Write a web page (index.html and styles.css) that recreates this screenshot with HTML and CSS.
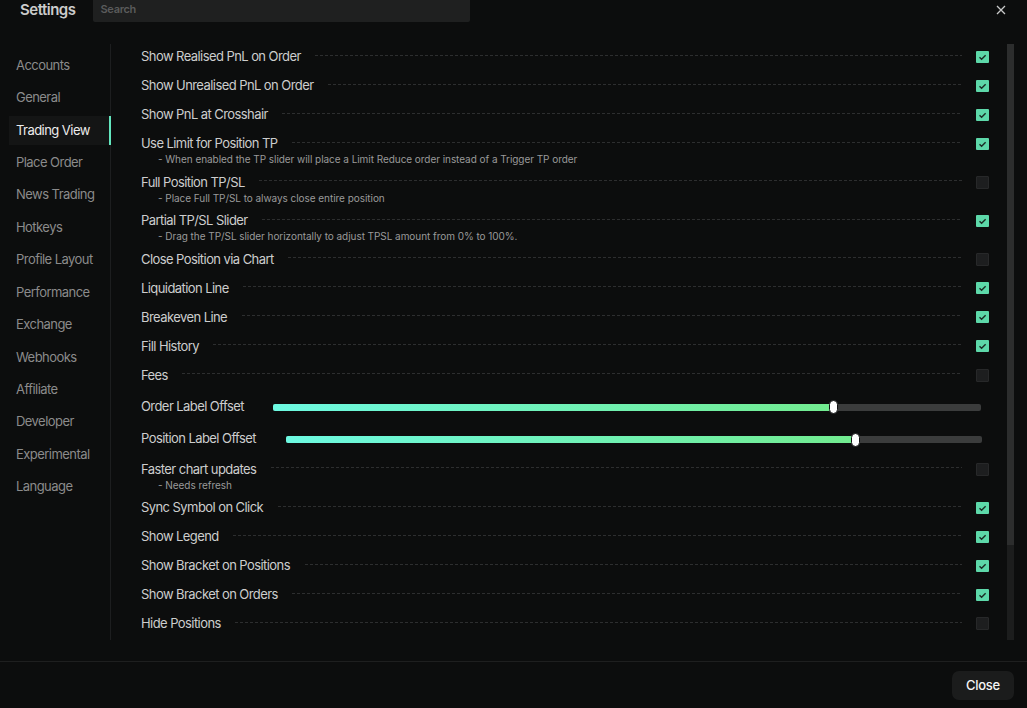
FILE: index.html
```html
<!DOCTYPE html>
<html>
<head>
<meta charset="utf-8">
<link rel="stylesheet" href="styles.css">
</head>
<body>
<div class="dialog">
  <header class="header">
    <div class="title">Settings</div>
    <div class="search">Search</div>
    <div class="spacer"></div>
    <svg class="x-icon" width="10" height="10" viewBox="0 0 10 10"><path d="M1 1L9 9M9 1L1 9" stroke="#c9c9c9" stroke-width="1.3" fill="none"/></svg>
  </header>
  <main class="main">
    <nav class="sidebar">
      <div class="nav-item">Accounts</div>
      <div class="nav-item">General</div>
      <div class="nav-item active">Trading View</div>
      <div class="nav-item">Place Order</div>
      <div class="nav-item">News Trading</div>
      <div class="nav-item">Hotkeys</div>
      <div class="nav-item">Profile Layout</div>
      <div class="nav-item">Performance</div>
      <div class="nav-item">Exchange</div>
      <div class="nav-item">Webhooks</div>
      <div class="nav-item">Affiliate</div>
      <div class="nav-item">Developer</div>
      <div class="nav-item">Experimental</div>
      <div class="nav-item">Language</div>
    </nav>
    <section class="content">
      <div class="row"><div class="line"><span class="label">Show Realised PnL on Order</span><span class="dash"></span><span class="cb on"><svg viewBox="0 0 13 12"><path d="M3.5 6.2L5.6 8.3L9.6 4.2"/></svg></span></div></div>
      <div class="row"><div class="line"><span class="label">Show Unrealised PnL on Order</span><span class="dash"></span><span class="cb on"><svg viewBox="0 0 13 12"><path d="M3.5 6.2L5.6 8.3L9.6 4.2"/></svg></span></div></div>
      <div class="row"><div class="line"><span class="label">Show PnL at Crosshair</span><span class="dash"></span><span class="cb on"><svg viewBox="0 0 13 12"><path d="M3.5 6.2L5.6 8.3L9.6 4.2"/></svg></span></div></div>
      <div class="row has-desc"><div class="line"><span class="label">Use Limit for Position TP</span><span class="dash"></span><span class="cb on"><svg viewBox="0 0 13 12"><path d="M3.5 6.2L5.6 8.3L9.6 4.2"/></svg></span></div><div class="desc">- When enabled the TP slider will place a Limit Reduce order instead of a Trigger TP order</div></div>
      <div class="row has-desc"><div class="line"><span class="label">Full Position TP/SL</span><span class="dash"></span><span class="cb"></span></div><div class="desc">- Place Full TP/SL to always close entire position</div></div>
      <div class="row has-desc"><div class="line"><span class="label">Partial TP/SL Slider</span><span class="dash"></span><span class="cb on"><svg viewBox="0 0 13 12"><path d="M3.5 6.2L5.6 8.3L9.6 4.2"/></svg></span></div><div class="desc">- Drag the TP/SL slider horizontally to adjust TPSL amount from 0% to 100%.</div></div>
      <div class="row"><div class="line"><span class="label">Close Position via Chart</span><span class="dash"></span><span class="cb"></span></div></div>
      <div class="row"><div class="line"><span class="label">Liquidation Line</span><span class="dash"></span><span class="cb on"><svg viewBox="0 0 13 12"><path d="M3.5 6.2L5.6 8.3L9.6 4.2"/></svg></span></div></div>
      <div class="row"><div class="line"><span class="label">Breakeven Line</span><span class="dash"></span><span class="cb on"><svg viewBox="0 0 13 12"><path d="M3.5 6.2L5.6 8.3L9.6 4.2"/></svg></span></div></div>
      <div class="row"><div class="line"><span class="label">Fill History</span><span class="dash"></span><span class="cb on"><svg viewBox="0 0 13 12"><path d="M3.5 6.2L5.6 8.3L9.6 4.2"/></svg></span></div></div>
      <div class="row"><div class="line"><span class="label">Fees</span><span class="dash"></span><span class="cb"></span></div></div>
      <div class="row slider-row"><div class="line"><span class="label">Order Label Offset</span><span class="track track-1"><span class="fill" style="width: 79.1%"></span><span class="thumb"></span></span></div></div>
      <div class="row slider-row"><div class="line"><span class="label">Position Label Offset</span><span class="track track-2"><span class="fill" style="width: 81.8%"></span><span class="thumb"></span></span></div></div>
      <div class="row has-desc"><div class="line"><span class="label">Faster chart updates</span><span class="dash"></span><span class="cb"></span></div><div class="desc">- Needs refresh</div></div>
      <div class="row"><div class="line"><span class="label">Sync Symbol on Click</span><span class="dash"></span><span class="cb on"><svg viewBox="0 0 13 12"><path d="M3.5 6.2L5.6 8.3L9.6 4.2"/></svg></span></div></div>
      <div class="row"><div class="line"><span class="label">Show Legend</span><span class="dash"></span><span class="cb on"><svg viewBox="0 0 13 12"><path d="M3.5 6.2L5.6 8.3L9.6 4.2"/></svg></span></div></div>
      <div class="row"><div class="line"><span class="label">Show Bracket on Positions</span><span class="dash"></span><span class="cb on"><svg viewBox="0 0 13 12"><path d="M3.5 6.2L5.6 8.3L9.6 4.2"/></svg></span></div></div>
      <div class="row"><div class="line"><span class="label">Show Bracket on Orders</span><span class="dash"></span><span class="cb on"><svg viewBox="0 0 13 12"><path d="M3.5 6.2L5.6 8.3L9.6 4.2"/></svg></span></div></div>
      <div class="row"><div class="line"><span class="label">Hide Positions</span><span class="dash"></span><span class="cb"></span></div></div>
    </section>
    <div class="scrollbar"><div class="thumb-bar"></div></div>
  </main>
  <footer class="footer">
    <button class="close-btn">Close</button>
  </footer>
</div>
</body>
</html>
```

FILE: styles.css
```css
* { box-sizing: border-box; }
html, body {
  margin: 0;
  padding: 0;
  background: #0c0d0d;
}
body {
  width: 1027px;
  height: 708px;
  overflow: hidden;
  font-family: Inter, "Noto Sans", sans-serif;
  color: #d0d0d0;
}
.dialog {
  display: flex;
  flex-direction: column;
  height: 708px;
}
.header {
  height: 40px;
  display: flex;
  align-items: flex-start;
  flex-shrink: 0;
}
.title {
  margin-left: 20px;
  height: 20px;
  line-height: 19px;
  font-size: 15px;
  font-weight: 600;
  letter-spacing: -0.5px;
  color: #cbcbcb;
}
.search {
  margin-left: 18px;
  width: 377px;
  height: 22px;
  background: #1f2020;
  border-radius: 0 0 2px 2px;
  color: #5a5b5b;
  font-size: 11px;
  font-weight: 600;
  letter-spacing: -0.3px;
  line-height: 19px;
  padding-left: 7px;
}
.spacer { flex: 1; }
.x-icon {
  margin-top: 5px;
  margin-right: 21px;
}
.main {
  display: flex;
  height: 621px;
  flex-shrink: 0;
}
.sidebar {
  width: 111px;
  margin: 4px 0 21px;
  border-right: 1px solid #1d1e1f;
  padding: 6.8px 0 0 9px;
  display: flex;
  flex-direction: column;
  gap: 3.43px;
}
.nav-item {
  height: 29px;
  line-height: 28px;
  padding-left: 7px;
  margin-right: -1px;
  font-size: 13px;
  letter-spacing: -0.55px;
  color: #8b8b8b;
}
.nav-item.active {
  background: #141515;
  color: #ececec;
  border-right: 2px solid #63e6be;
}
.content {
  flex: 1;
  height: 600px;
  padding: 1.5px 18px 0 30px;
  overflow: hidden;
}
.row {
  padding: 6.5px 0;
}
.row.has-desc {
  padding-bottom: 1px;
}
.row.slider-row {
  padding: 8.5px 0 8px;
}
.line {
  display: flex;
  align-items: center;
  height: 16px;
}
.label {
  font-size: 13px;
  line-height: 16px;
  letter-spacing: -0.57px;
  color: #cdcdcd;
  white-space: nowrap;
}
.dash {
  flex: 1;
  height: 1px;
  margin: -2px 14px 0 14.5px;
  background: repeating-linear-gradient(to right, #2d2e2f 0 3px, transparent 3px 5px);
}
.desc {
  margin-top: 1px;
  padding-left: 17px;
  font-size: 10px;
  line-height: 14px;
  letter-spacing: -0.05px;
  color: #9a9a9a;
  white-space: nowrap;
}
.cb {
  width: 13px;
  height: 13px;
  margin-top: 1px;
  background: #1d1e1f;
  border: 1px solid #272829;
  border-radius: 1px;
  flex-shrink: 0;
  display: block;
}
.cb.on {
  background: #5dd8a9;
  border: none;
  height: 12px;
}
.cb svg {
  display: block;
  width: 13px;
  height: 12px;
}
.cb svg path {
  stroke: #1c2c25;
  stroke-width: 1.4;
  fill: none;
}
.track {
  flex: 1;
  position: relative;
  height: 7px;
  margin-top: 3px;
  margin-right: 8px;
  background: #3b3c3c;
  border-radius: 2px;
  display: block;
}
.track-1 { margin-left: 29px; }
.track-2 { margin-left: 30px; margin-right: 7px; }
.fill {
  position: absolute;
  left: 0;
  top: 0;
  bottom: 0;
  border-radius: 2px 0 0 2px;
  background: linear-gradient(to right, #6df9e1, #72eb8f);
}
.track-1 .thumb { left: 79.1%; }
.track-2 .thumb { left: 81.8%; }
.thumb {
  position: absolute;
  top: 50%;
  width: 9px;
  height: 14px;
  margin-left: -4.5px;
  margin-top: -7px;
  background: #ffffff;
  border: 1.5px solid #111213;
  border-radius: 5px;
}
.scrollbar {
  width: 7px;
  margin: 4px 13px 21px 0;
  background: #1c1d1d;
}
.thumb-bar {
  height: 501px;
  background: #2c2d2d;
}
.footer {
  flex: 1;
  border-top: 1px solid #1e1f1f;
  display: flex;
  align-items: center;
  justify-content: flex-end;
  padding-right: 13px;
}
.close-btn {
  width: 62px;
  height: 29px;
  background: #1b1c1c;
  border: none;
  border-radius: 7px;
  color: #f4f4f4;
  font-family: Inter, "Noto Sans", sans-serif;
  font-size: 13px;
  font-weight: 500;
  letter-spacing: -0.3px;
  padding: 0;
}
```
